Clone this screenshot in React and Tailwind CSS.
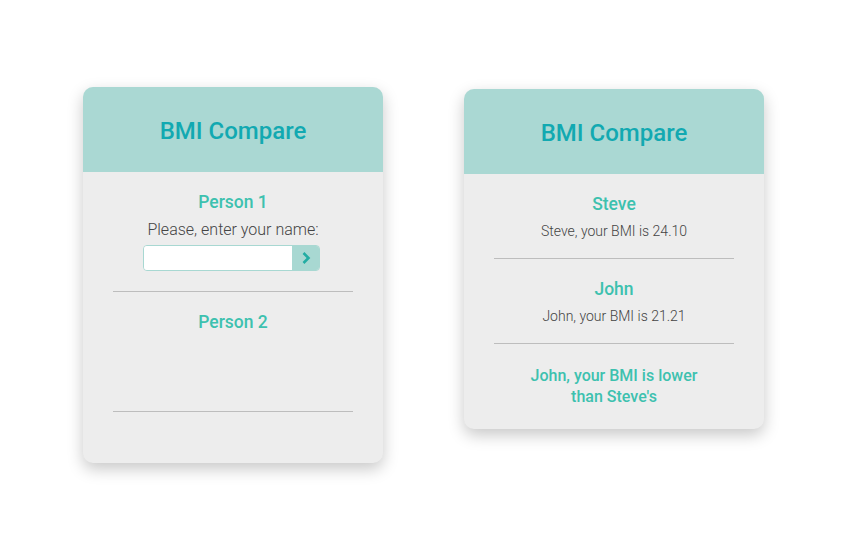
const Card = ({ children, className = '' }) => (
  <div className={`w-[300px] rounded-[10px] bg-[#ededed] shadow-[0_6px_16px_rgba(0,0,0,0.22)] overflow-hidden ${className}`}>
    <div className="h-[85px] bg-[#aad8d3] flex items-center justify-center pt-[2px]">
      <h1 className="text-[24px] text-[#12a9b1] font-medium">BMI Compare</h1>
    </div>
    {children}
  </div>
);

const App = () => {
  return (
    <div className="w-[856px] h-[544px] bg-white flex items-start gap-[81px] pl-[83px] pt-[87px] font-['Roboto',sans-serif]">
      <Card>
        <div className="px-[30px]">
          <div className="h-[120px] border-b border-[#bdbdbd] pt-[19px] flex flex-col items-center">
            <h2 className="text-[17.5px] leading-[22px] font-medium text-[#3dc1af]">Person 1</h2>
            <p className="mt-[7px] text-[16px] leading-[20px] font-light text-[#444]">Please, enter your name:</p>
            <div className="mt-[5px] mr-[3px] flex h-[26px] w-[177px] rounded-[4px] border border-[#a8d8d2] overflow-hidden">
              <input className="flex-1 min-w-0 bg-white outline-none px-2 text-sm" />
              <button className="w-[27px] bg-[#a8d8d2] flex items-center justify-center">
                <svg width="10" height="14" viewBox="0 0 10 14" fill="none">
                  <path d="M2.5 2 L7.5 7 L2.5 12" stroke="#22ada3" strokeWidth="2.6" />
                </svg>
              </button>
            </div>
          </div>
          <div className="h-[120px] border-b border-[#bdbdbd] pt-[19px] flex flex-col items-center">
            <h2 className="text-[17.5px] leading-[22px] font-medium text-[#3dc1af]">Person 2</h2>
          </div>
          <div className="h-[51px]" />
        </div>
      </Card>

      <Card className="mt-[2px]">
        <div className="px-[30px]">
          <div className="h-[85px] border-b border-[#bdbdbd] pt-[19px] flex flex-col items-center">
            <h2 className="text-[17.5px] leading-[22px] font-medium text-[#3dc1af]">Steve</h2>
            <p className="mt-[7px] text-[14px] leading-[18px] font-light text-[#444]">Steve, your BMI is 24.10</p>
          </div>
          <div className="h-[85px] border-b border-[#bdbdbd] pt-[19px] flex flex-col items-center">
            <h2 className="text-[17.5px] leading-[22px] font-medium text-[#3dc1af]">John</h2>
            <p className="mt-[7px] text-[14px] leading-[18px] font-light text-[#444]">John, your BMI is 21.21</p>
          </div>
          <div className="pt-[21px] pb-[22px] flex justify-center">
            <p className="max-w-[190px] text-[16px] leading-[21px] font-medium text-[#3dc1af] text-center">
              John, your BMI is lower than Steve's
            </p>
          </div>
        </div>
      </Card>
    </div>
  );
};

export default App;
